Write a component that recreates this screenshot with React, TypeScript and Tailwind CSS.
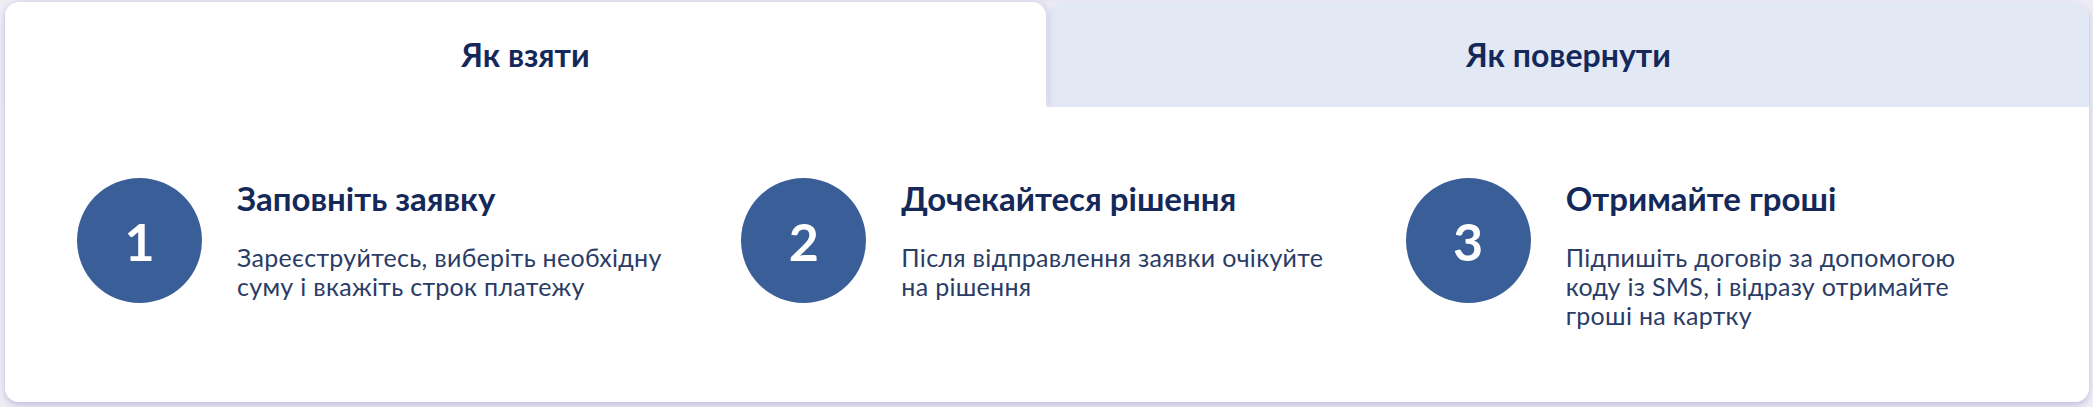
import React, { useState } from "react";

type Step = { n: number; title: string; lines: string[] };

const STEPS: Step[] = [
  { n: 1, title: "Заповніть заявку", lines: ["Зареєструйтесь, виберіть необхідну", "суму і вкажіть строк платежу"] },
  { n: 2, title: "Дочекайтеся рішення", lines: ["Після відправлення заявки очікуйте", "на рішення"] },
  { n: 3, title: "Отримайте гроші", lines: ["Підпишіть договір за допомогою", "коду із SMS, і відразу отримайте", "гроші на картку"] },
];

const TABS = ["Як взяти", "Як повернути"];

export default function App() {
  const [tab, setTab] = useState(0);

  return (
    <div className="w-full h-[407px] bg-[#eeedf6] pt-[2px] pl-[5px] pr-[4px] font-['Lato','Noto_Sans',sans-serif]">
      <div className="h-[400px] rounded-[14px] shadow-[0_3px_6px_rgba(110,100,175,0.35)] flex flex-col">
        {/* Tabs */}
        <div className="flex gap-[2px] h-[105px]">
          {TABS.map((t, i) => (
            <button
              key={t}
              onClick={() => setTab(i)}
              className={`flex-1 flex items-center justify-center rounded-t-[14px] text-[32px] font-bold text-[#14295a] ${
                tab === i ? "bg-white relative z-10 shadow-[3px_0_6px_rgba(110,100,175,0.18)]" : "bg-[#e3e9f4]"
              }`}
            >
              {t}
            </button>
          ))}
        </div>

        {/* Steps */}
        <div className="flex-1 bg-white rounded-b-[14px] relative z-20 grid grid-cols-3 gap-[53px] pl-[72px] pr-[72px] pt-[71px]">
          {STEPS.map((s) => (
            <div key={s.n} className="flex items-start gap-[35px]">
              <div className="w-[125px] h-[125px] shrink-0 rounded-full bg-[#3a5f98] flex items-center justify-center text-white text-[52px] font-bold">
                {s.n}
              </div>
              <div className="pt-[1px]">
                <h3 className="text-[33px] leading-[38px] font-bold text-[#14295a]">{s.title}</h3>
                <p className="mt-[26px] text-[25px] leading-[29px] tracking-[0.3px] font-normal text-[#2b3c66] whitespace-nowrap">
                  {s.lines.map((l, i) => (
                    <span key={i} className="block">{l}</span>
                  ))}
                </p>
              </div>
            </div>
          ))}
        </div>
      </div>
    </div>
  );
}
